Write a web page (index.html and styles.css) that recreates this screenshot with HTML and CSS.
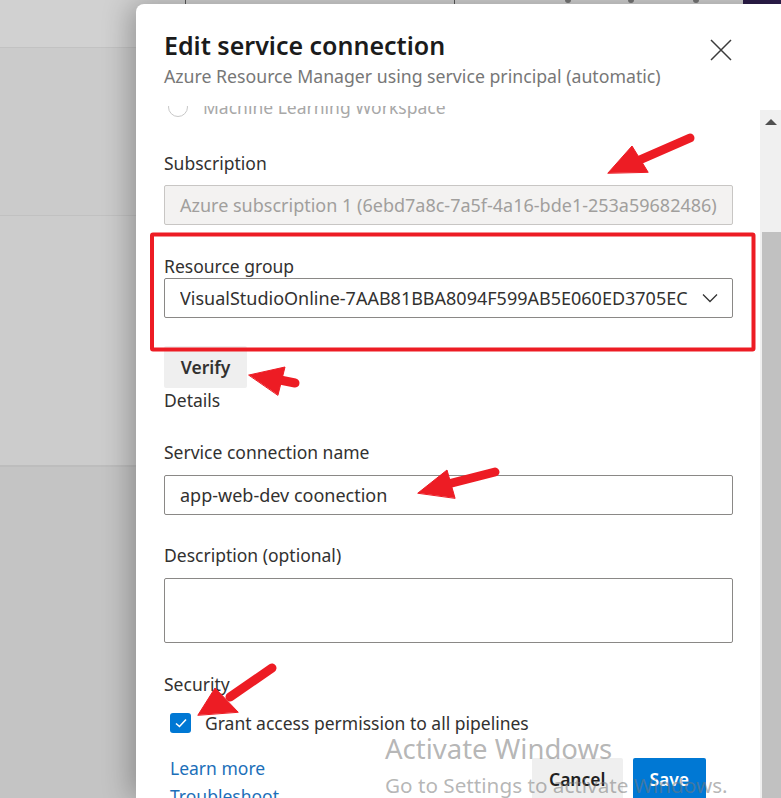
FILE: index.html
```html
<!DOCTYPE html>
<html lang="en">
<head>
<meta charset="utf-8">
<title>Edit service connection</title>
<link rel="stylesheet" href="styles.css">
</head>
<body>
<div class="page">
  <div class="topbar">
    <span class="sep sep-a"></span>
    <span class="sep sep-b"></span>
    <span class="dot dot-a"></span>
    <span class="dot dot-b"></span>
    <span class="dot dot-c"></span>
    <span class="avatar"></span>
  </div>
  <div class="band band-1"></div>
  <div class="band band-2"></div>
  <div class="band band-3"></div>
</div>

<div class="panel">
  <div class="panel-header">
    <div class="titles">
      <h1 class="title">Edit service connection</h1>
      <div class="subtitle">Azure Resource Manager using service principal (automatic)</div>
    </div>
    <button class="close" aria-label="Close">
      <svg width="22" height="22" viewBox="0 0 22 22"><path d="M1 1 L21 21 M21 1 L1 21" stroke="#3b3b3b" stroke-width="1.5" fill="none"/></svg>
    </button>
  </div>
  <div class="panel-body">
    <div class="content">
      <div class="radio-row"><span class="radio"></span><span class="radio-label">Machine Learning Workspace</span></div>

      <div class="label lbl-first">Subscription</div>
      <div class="input disabled">Azure subscription 1 (6ebd7a8c-7a5f-4a16-bde1-253a59682486)</div>

      <div class="label lbl-tight">Resource group</div>
      <div class="input dropdown">
        <span class="value">VisualStudioOnline-7AAB81BBA8094F599AB5E060ED3705EC</span>
        <svg class="chevron" width="16" height="10" viewBox="0 0 16 10"><path d="M1 1.5 L8 8.5 L15 1.5" stroke="#333" stroke-width="1.3" fill="none"/></svg>
      </div>

      <button class="btn verify">Verify</button>
      <div class="label">Details</div>

      <div class="label lbl-gap">Service connection name</div>
      <div class="input text">app-web-dev coonection</div>

      <div class="label lbl-gap">Description (optional)</div>
      <div class="input textarea"></div>

      <div class="label lbl-security">Security</div>
      <div class="check-row">
        <span class="checkbox">
          <svg width="14" height="12" viewBox="0 0 14 12"><path d="M2 6.5 L5.5 9.5 L12 2.5" stroke="#fff" stroke-width="1.6" fill="none"/></svg>
        </span>
        <span class="check-label">Grant access permission to all pipelines</span>
      </div>

      <div class="footer">
        <div class="links">
          <a class="link" href="#">Learn more</a>
          <a class="link" href="#">Troubleshoot</a>
        </div>
        <div class="actions">
          <button class="btn cancel">Cancel</button>
          <button class="btn primary">Save</button>
        </div>
      </div>
    </div>
    <div class="scrollbar">
      <div class="sb-track"><span class="sb-arrow"></span></div>
      <div class="sb-thumb"></div>
    </div>
  </div>
</div>

<div class="watermark">
  <div class="wm-title">Activate Windows</div>
  <div class="wm-sub">Go to Settings to activate Windows.</div>
</div>

<svg class="annotations" width="781" height="798" viewBox="0 0 781 798">
  <rect x="152" y="234.5" width="601.5" height="115" rx="1" fill="none" stroke="#ed1c24" stroke-width="4"/>
  <g fill="#ed1c24" stroke="#ed1c24" stroke-linecap="round" stroke-linejoin="round">
    <line x1="690" y1="138" x2="635" y2="162" stroke-width="9"/>
    <polygon points="608,173 632,146 648,172" stroke-width="1"/>
    <line x1="295" y1="383" x2="275" y2="379" stroke-width="9"/>
    <polygon points="249,375 285,367 278,395" stroke-width="1"/>
    <line x1="495" y1="472" x2="448" y2="484" stroke-width="9"/>
    <polygon points="418,493 447,470 455,498" stroke-width="1"/>
    <line x1="272" y1="668" x2="230" y2="697" stroke-width="9"/>
    <polygon points="198,715 215,688 238,712" stroke-width="1"/>
  </g>
</svg>
</body>
</html>
```

FILE: styles.css
```css
* { box-sizing: border-box; }

html, body {
  margin: 0;
  padding: 0;
  width: 781px;
  height: 798px;
  overflow: hidden;
}

body {
  position: relative;
  background: #c4c4c4;
  font-family: "Noto Sans", "Open Sans", sans-serif;
  color: #323130;
}

/* dimmed page behind the panel */
.page {
  display: flex;
  flex-direction: column;
  height: 798px;
}

.topbar {
  position: relative;
  height: 48px;
  background: #d1d1d1;
  border-bottom: 1px solid #c2c2c2;
  flex: none;
}

.sep {
  position: absolute;
  top: 0;
  width: 1px;
  height: 30px;
  background: #5a5a5a;
}
.sep-a { left: 185px; }
.sep-b { left: 454px; }

.dot {
  position: absolute;
  top: 0;
  width: 6px;
  height: 3px;
  background: #777;
  border-radius: 0 0 3px 3px;
}
.dot-a { left: 565px; }
.dot-b { left: 628px; }
.dot-c { left: 693px; }

.avatar {
  position: absolute;
  top: 0;
  left: 743px;
  width: 38px;
  height: 30px;
  background: #2c1d4a;
}

.band { flex: none; }
.band-1 {
  height: 168px;
  background: #cbcbcb;
  border-bottom: 1px solid #c1c1c1;
}
.band-2 {
  height: 251px;
  background: #cccccc;
  border-bottom: 2px solid #bdbdbd;
}
.band-3 {
  flex: 1;
  background: #c4c4c4;
}

/* side panel */
.panel {
  position: absolute;
  left: 136px;
  top: 4px;
  width: 645px;
  height: 794px;
  background: #ffffff;
  border-top-left-radius: 8px;
  box-shadow: -6px 0 28px rgba(0, 0, 0, 0.28);
  display: flex;
  flex-direction: column;
}

.panel-header {
  flex: none;
  height: 102px;
  padding: 25px 49px 0 28px;
  display: flex;
  justify-content: space-between;
  align-items: flex-start;
}

.title {
  margin: 0;
  font-size: 25px;
  line-height: 32px;
  font-weight: 600;
  color: #1b1b1b;
}

.subtitle {
  margin-top: 4px;
  font-size: 17.7px;
  line-height: 22px;
  color: #777777;
}

.close {
  margin-top: 10px;
  padding: 0;
  border: 0;
  background: none;
  width: 22px;
  height: 22px;
  display: flex;
}

.panel-body {
  flex: 1;
  display: flex;
  overflow: hidden;
  min-height: 0;
}

.content {
  flex: 1;
  padding: 0 27px 0 28px;
  display: flex;
  flex-direction: column;
  align-items: stretch;
}

.content > * { flex-shrink: 0; }

.radio-row {
  margin-top: -9px;
  height: 20px;
  display: flex;
  align-items: center;
  gap: 15px;
  padding-left: 4px;
}

.radio {
  width: 20px;
  height: 20px;
  border: 1px solid #c8c8c8;
  border-radius: 50%;
  flex: none;
}

.radio-label {
  font-size: 17.5px;
  color: #a8a8a8;
  line-height: 20px;
}

.label {
  font-size: 17.5px;
  line-height: 24px;
  color: #323130;
}

.lbl-first { margin-top: 34px; margin-bottom: 10px; }
.lbl-gap { margin-top: 28px; margin-bottom: 11px; }
.lbl-tight { margin-top: 29px; margin-bottom: 0; }
.lbl-security { margin-top: 29px; }

.input {
  height: 40px;
  border: 1px solid #8a8886;
  border-radius: 2px;
  padding: 0 15px;
  font-size: 18px;
  display: flex;
  align-items: center;
  color: #323130;
  white-space: nowrap;
  overflow: hidden;
}

.input.disabled {
  background: #f3f2f1;
  border-color: #c8c6c4;
  color: #a19f9d;
}

.input.dropdown {
  justify-content: space-between;
  padding-right: 14px;
}

.input.dropdown .value {
  overflow: hidden;
}

.chevron { flex: none; margin-left: 12px; }

.input.textarea {
  height: 65px;
}

.btn {
  font-family: inherit;
  font-size: 17.5px;
  font-weight: 600;
  border: 0;
  border-radius: 2px;
  cursor: pointer;
}

.verify {
  align-self: flex-start;
  margin-top: 28px;
  width: 83px;
  height: 42px;
  background: #efefef;
  color: #323130;
  padding: 0;
}

.check-row {
  margin-top: 15px;
  height: 24px;
  display: flex;
  align-items: center;
  padding-left: 6px;
}

.checkbox {
  width: 21px;
  height: 20px;
  background: #0078d4;
  border-radius: 3px;
  display: flex;
  align-items: center;
  justify-content: center;
  flex: none;
}

.check-label {
  margin-left: 14px;
  font-size: 17.5px;
  line-height: 24px;
  color: #323130;
}

.footer {
  margin-top: 21px;
  display: flex;
  justify-content: space-between;
  align-items: flex-start;
}

.links {
  display: flex;
  flex-direction: column;
  gap: 4px;
  padding-left: 6px;
}

.link {
  font-size: 17.5px;
  line-height: 24px;
  color: #1c6fb9;
  text-decoration: none;
}

.actions {
  margin-top: 2px;
  margin-right: 27px;
  display: flex;
  gap: 10px;
}

.cancel {
  width: 91px;
  height: 42px;
  background: #efefef;
  color: #1f1f1f;
}

.primary {
  width: 73px;
  height: 42px;
  background: #0078d4;
  color: #ffffff;
}

.scrollbar {
  flex: none;
  width: 22px;
  margin-top: 4px;
  display: flex;
  flex-direction: column;
  background: #f0f0f0;
}

.sb-track {
  height: 122px;
  display: flex;
  justify-content: center;
  padding-top: 9px;
}

.sb-arrow {
  width: 0;
  height: 0;
  border-left: 6px solid transparent;
  border-right: 6px solid transparent;
  border-bottom: 6px solid #505050;
}

.sb-thumb {
  flex: 1;
  margin-left: 2px;
  background: #c1c1c1;
}

/* overlays */
.watermark {
  position: absolute;
  left: 385px;
  top: 733px;
  color: rgba(120, 120, 120, 0.55);
  pointer-events: none;
  white-space: nowrap;
}

.wm-title {
  font-size: 27.5px;
  line-height: 32px;
}

.wm-sub {
  font-size: 20.7px;
  line-height: 26px;
  margin-top: 7px;
}

.annotations {
  position: absolute;
  left: 0;
  top: 0;
  pointer-events: none;
}
```
